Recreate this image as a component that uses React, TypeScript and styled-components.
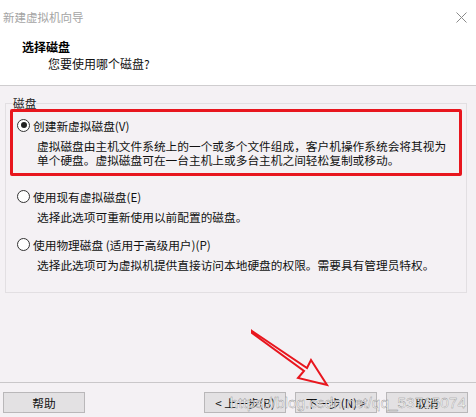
import React from "react";
import styled, { createGlobalStyle } from "styled-components";

const GlobalStyle = createGlobalStyle`
  html, body {
    margin: 0;
    padding: 0;
    background: #f4f1f4;
  }
  body {
    font-family: "Noto Sans CJK SC", "Noto Sans", sans-serif;
    color: #111;
  }
`;

const Window = styled.div`
  position: relative;
  width: 476px;
  height: 417px;
  display: flex;
  flex-direction: column;
  background: #f4f1f4;
  overflow: hidden;
`;

const Header = styled.div`
  height: 86px;
  background: #fff;
  border-bottom: 1px solid #cfcdcf;
  box-sizing: border-box;
  display: flex;
  flex-direction: column;
`;

const TitleRow = styled.div`
  display: flex;
  justify-content: space-between;
  align-items: center;
  padding: 9px 9px 0 3px;
  height: 16px;
`;

const Title = styled.span`
  font-size: 11.5px;
  line-height: 16px;
  color: #a4a4a4;
`;

const Heading = styled.div`
  margin-top: 14px;
  padding-left: 22px;
  font-size: 12px;
  line-height: 16px;
  font-weight: 700;
  color: #000;
`;

const SubHeading = styled.div`
  margin-top: 1px;
  padding-left: 48px;
  font-size: 12px;
  line-height: 16px;
  color: #111;
`;

const Body = styled.div`
  flex: 1;
  padding: 11px 9px 0 5px;
`;

const GroupBox = styled.fieldset`
  margin: 0;
  padding: 0 4px 20px 4px;
  border: 1px solid #e2dfe2;
  min-width: 0;
`;

const Legend = styled.legend`
  margin-left: 3px;
  padding: 0;
  font-size: 11.7px;
  line-height: 12px;
  color: #222;
`;

const OptionList = styled.div`
  display: flex;
  flex-direction: column;
  gap: 10px;
`;

const OptionBlock = styled.div<{ $highlight?: boolean }>`
  border: ${(p) => (p.$highlight ? "3px solid #e8161e" : "0")};
  border-radius: 2px;
  padding: ${(p) => (p.$highlight ? "3px 0 6px" : "0 3px")};
`;

const RadioRow = styled.label`
  display: flex;
  align-items: center;
  height: 20px;
  padding-left: 4px;
  gap: 3px;
  font-size: 11.7px;
  color: #111;
`;

const RadioCircle = styled.span<{ $checked?: boolean }>`
  position: relative;
  width: 11px;
  height: 11px;
  border: 1px solid #333;
  border-radius: 50%;
  background: #fff;
  flex: none;

  &::after {
    content: "";
    display: ${(p) => (p.$checked ? "block" : "none")};
    position: absolute;
    left: 2.5px;
    top: 2.5px;
    width: 6px;
    height: 6px;
    border-radius: 50%;
    background: #222;
  }
`;

const Desc = styled.div`
  margin-top: 4px;
  padding-left: 24px;
  font-size: 11.7px;
  line-height: 14px;
  color: #111;
`;

const Footer = styled.div`
  height: 35px;
  border-top: 1px solid #c9c7c9;
  box-sizing: border-box;
  display: flex;
  align-items: flex-start;
  gap: 9px;
  padding: 9px 8px 0 3px;
`;

const Spacer = styled.div`
  flex: 1;
`;

const Button = styled.button`
  width: 82px;
  height: 21px;
  box-sizing: border-box;
  border: 1px solid #b9b7b9;
  background: #e3e1e3;
  font-family: "Noto Sans CJK SC", sans-serif;
  font-size: 11.7px;
  line-height: 19px;
  color: #111;
  padding: 0;
`;

const Watermark = styled.div`
  position: absolute;
  right: 10px;
  top: 394px;
  font-family: "Liberation Sans", Arial, sans-serif;
  font-size: 15.4px;
  line-height: 17px;
  color: rgba(255, 255, 255, 0.85);
  -webkit-text-stroke: 0.4px rgba(110, 110, 110, 0.75);
  pointer-events: none;
  white-space: nowrap;
`;

const ArrowLayer = styled.svg`
  position: absolute;
  left: 245px;
  top: 325px;
  pointer-events: none;
`;

const CloseIcon = () => (
  <svg width="11" height="11" viewBox="0 0 11 11">
    <path d="M0.5 0.5 L10.5 10.5 M10.5 0.5 L0.5 10.5" stroke="#8a8a8a" strokeWidth="1" fill="none" />
  </svg>
);

const options = [
  {
    label: "创建新虚拟磁盘(V)",
    lines: [
      "虚拟磁盘由主机文件系统上的一个或多个文件组成，客户机操作系统会将其视为",
      "单个硬盘。虚拟磁盘可在一台主机上或多台主机之间轻松复制或移动。",
    ],
    checked: true,
  },
  {
    label: "使用现有虚拟磁盘(E)",
    lines: ["选择此选项可重新使用以前配置的磁盘。"],
  },
  {
    label: "使用物理磁盘 (适用于高级用户)(P)",
    lines: ["选择此选项可为虚拟机提供直接访问本地硬盘的权限。需要具有管理员特权。"],
  },
];

export default function App() {
  return (
    <Window>
      <GlobalStyle />
      <Header>
        <TitleRow>
          <Title>新建虚拟机向导</Title>
          <CloseIcon />
        </TitleRow>
        <Heading>选择磁盘</Heading>
        <SubHeading>您要使用哪个磁盘?</SubHeading>
      </Header>

      <Body>
        <GroupBox>
          <Legend>磁盘</Legend>
          <OptionList>
            {options.map((o) => (
              <OptionBlock key={o.label} $highlight={o.checked}>
                <RadioRow>
                  <RadioCircle $checked={o.checked} />
                  {o.label}
                </RadioRow>
                <Desc>
                  {o.lines.map((l) => (
                    <div key={l}>{l}</div>
                  ))}
                </Desc>
              </OptionBlock>
            ))}
          </OptionList>
        </GroupBox>
      </Body>

      <Footer>
        <Button>帮助</Button>
        <Spacer />
        <Button>&lt; 上一步(B)</Button>
        <Button>下一步(N) &gt;</Button>
        <Button>取消</Button>
      </Footer>

      <ArrowLayer width="90" height="66" viewBox="0 0 90 66">
        <path
          d="M7 6 L62 43 L66 35 L82 60 L53 53 L59 46 L7 8 Z"
          fill="none"
          stroke="#e8161e"
          strokeWidth="2"
          strokeLinejoin="miter"
        />
      </ArrowLayer>

      <Watermark>https://blog.csdn.net/qq_53715074</Watermark>
    </Window>
  );
}
